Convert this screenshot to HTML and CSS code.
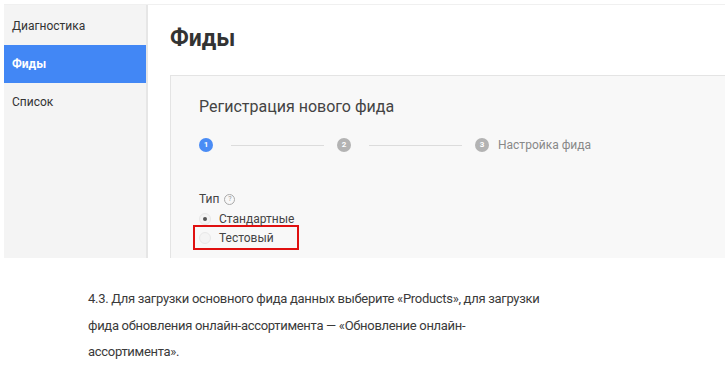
FILE: index.html
```html
<!DOCTYPE html>
<html lang="ru">
<head>
  <meta charset="UTF-8">
  <title>Фиды</title>
  <link rel="stylesheet" href="styles.css">
</head>
<body>

  <div class="shot">
    <div class="sidebar">
      <div class="nav-item">Диагностика</div>
      <div class="nav-item active">Фиды</div>
      <div class="nav-item">Список</div>
    </div>

    <div class="main">
      <h1>Фиды</h1>

      <div class="card">
        <h3>Регистрация нового фида</h3>

        <div class="steps">
          <span class="step current">1</span>
          <span class="line"></span>
          <span class="step">2</span>
          <span class="line"></span>
          <span class="step">3</span>
          <span class="step-label">Настройка фида</span>
        </div>

        <div class="field-label">
          Тип <span class="help">?</span>
        </div>

        <label class="radio"><span class="dot checked"></span>Стандартные</label>
        <label class="radio marked"><span class="dot"></span>Тестовый</label>
      </div>
    </div>
  </div>

  <p class="note">
    4.3. Для загрузки основного фида данных выберите «Products», для загрузки
    фида обновления онлайн-ассортимента — «Обновление онлайн-ассортимента».
  </p>

</body>
</html>
```

FILE: styles.css
```css
body {
  margin: 0;
  background-color: #fff;
  font-family: Roboto, "Liberation Sans", sans-serif;
  color: #333;
}

.shot {
  display: flex;
  margin: 4px 0 0 4px;
  height: 253px;
  overflow: hidden;
  border-top: 1px solid #f0f0f0;
}

.sidebar {
  width: 142px;
  flex-shrink: 0;
  padding-top: 2px;
  background-color: #f4f4f4;
  border-right: 2px solid #e6e6e6;
}

.nav-item {
  height: 38px;
  line-height: 38px;
  padding-left: 8px;
  font-size: 12px;
  color: #333;
}

.nav-item.active {
  background-color: #4287f5;
  color: #fff;
  font-weight: bold;
}

.main {
  flex: 1;
  padding-left: 22px;
}

h1 {
  margin: 20px 0 22px;
  font-size: 23px;
  line-height: 28px;
  font-weight: bold;
  color: #333;
}

.card {
  height: 100%;
  padding: 21px 0 0 28px;
  background-color: #f8f8f8;
  border: 1px solid #e4e4e4;
  border-right: none;
}

.card h3 {
  margin: 0;
  font-size: 16px;
  line-height: 20px;
  font-weight: normal;
  color: #444;
}

.steps {
  display: flex;
  align-items: center;
  margin-top: 21px;
}

.step {
  width: 14px;
  height: 14px;
  border-radius: 50%;
  background-color: #b3b3b3;
  color: #fff;
  font-size: 8px;
  font-weight: bold;
  line-height: 14px;
  text-align: center;
}

.step.current {
  background-color: #4a8cf5;
}

.line {
  width: 93px;
  height: 1px;
  margin: 0 13px 0 18px;
  background-color: #dcdcdc;
}

.step-label {
  margin-left: 9px;
  font-size: 12px;
  color: #888;
}

.field-label {
  margin-top: 40px;
  font-size: 12px;
  color: #444;
  display: flex;
  align-items: center;
  gap: 5px;
}

.help {
  width: 9px;
  height: 9px;
  border: 1px solid #aaa;
  border-radius: 50%;
  font-size: 7px;
  line-height: 9px;
  text-align: center;
  color: #999;
}

.radio {
  display: flex;
  align-items: center;
  width: 98px;
  height: 18px;
  font-size: 12px;
  color: #444;
}

.radio:first-of-type {
  margin-top: 4px;
}

.dot {
  width: 12px;
  height: 12px;
  margin-right: 8px;
  border-radius: 50%;
  background-color: #f4f4f4;
  border: 1px solid #e8e8e8;
  box-sizing: border-box;
  position: relative;
}

.dot.checked::after {
  content: "";
  position: absolute;
  left: 3px;
  top: 3px;
  width: 4px;
  height: 4px;
  border-radius: 50%;
  background-color: #555;
}

.radio.marked {
  margin-left: -6px;
  padding-left: 4px;
  margin-top: -3px;
  height: 21px;
  border: 2px solid #e01010;
}

.note {
  margin: 28px 0 0 88px;
  width: 462px;
  font-family: Roboto, "Liberation Sans", sans-serif;
  font-size: 13px;
  letter-spacing: -0.3px;
  line-height: 26.5px;
  color: #3a3a3a;
}
```
